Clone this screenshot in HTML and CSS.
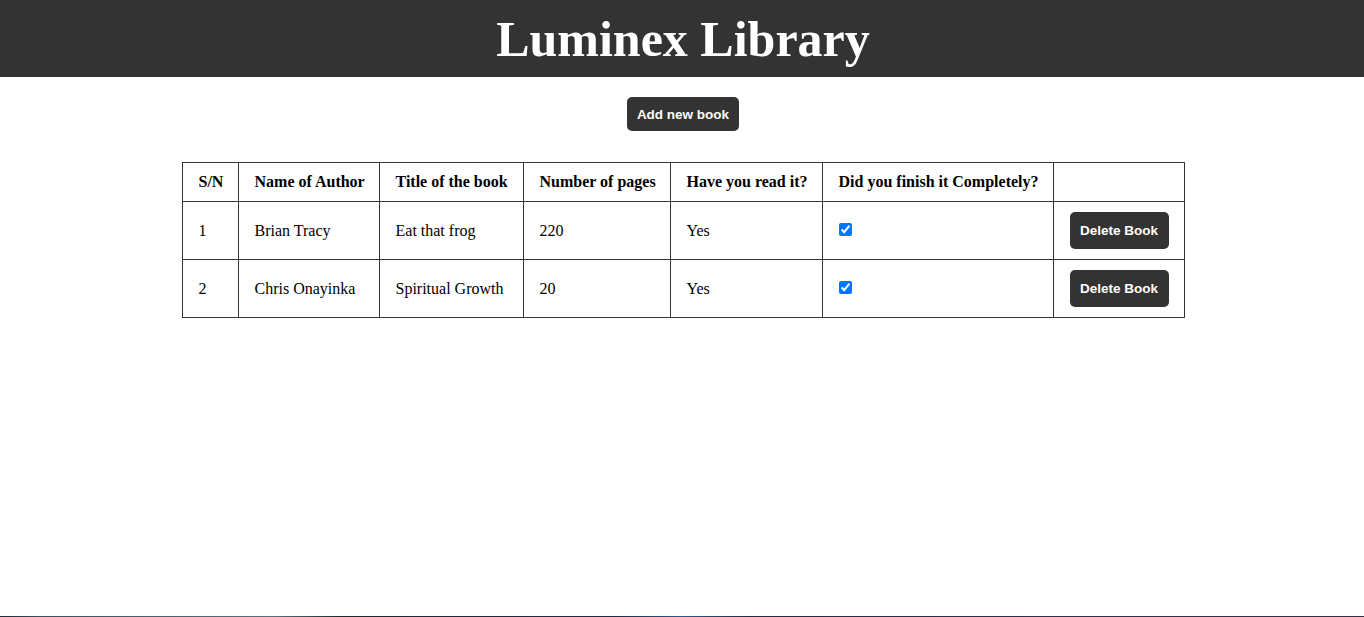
FILE: index.html
```html
<!DOCTYPE html>
<html lang="en">
<head>
<meta charset="utf-8">
<title>Luminex Library</title>
<link rel="stylesheet" href="styles.css">
</head>
<body>
<header class="site-header">
  <h1 class="site-title">Luminex Library</h1>
</header>
<main class="content">
  <button class="btn btn-add" type="button">Add new book</button>
  <table class="books">
    <colgroup>
      <col class="c-sn">
      <col class="c-author">
      <col class="c-title">
      <col class="c-pages">
      <col class="c-read">
      <col class="c-finish">
      <col class="c-action">
    </colgroup>
    <thead>
      <tr>
        <th>S/N</th>
        <th>Name of Author</th>
        <th>Title of the book</th>
        <th>Number of pages</th>
        <th>Have you read it?</th>
        <th>Did you finish it Completely?</th>
        <th></th>
      </tr>
    </thead>
    <tbody>
      <tr>
        <td>1</td>
        <td>Brian Tracy</td>
        <td>Eat that frog</td>
        <td>220</td>
        <td>Yes</td>
        <td><input class="check" type="checkbox" checked></td>
        <td><button class="btn btn-delete" type="button">Delete Book</button></td>
      </tr>
      <tr>
        <td>2</td>
        <td>Chris Onayinka</td>
        <td>Spiritual Growth</td>
        <td>20</td>
        <td>Yes</td>
        <td><input class="check" type="checkbox" checked></td>
        <td><button class="btn btn-delete" type="button">Delete Book</button></td>
      </tr>
    </tbody>
  </table>
</main>
<div class="taskbar-edge"></div>
</body>
</html>
```

FILE: styles.css
```css
html, body {
  margin: 0;
  padding: 0;
}

body {
  font-family: "Liberation Serif", "Times New Roman", serif;
  font-size: 16px;
  color: #000;
  background: #fff;
}

.site-header {
  background: #333;
  height: 77px;
  display: flex;
  align-items: center;
  justify-content: center;
  padding-left: 2px;
}

.site-title {
  margin: 0;
  color: #fff;
  font-family: "Liberation Serif", "Times New Roman", serif;
  font-weight: bold;
  font-size: 50px;
  line-height: 1;
}

.content {
  display: flex;
  flex-direction: column;
  align-items: center;
  padding-top: 20px;
  padding-left: 2px;
}

.btn {
  background: #333;
  color: #fff;
  border: none;
  border-radius: 5px;
  font-family: "Liberation Sans", Arial, sans-serif;
  font-weight: bold;
  font-size: 13.5px;
  cursor: pointer;
}

.btn-add {
  height: 34px;
  padding: 0 10px;
}

.books {
  margin-top: 31px;
  width: 1002px;
  table-layout: fixed;
  border-collapse: collapse;
  border: 1px solid #333;
}

.books th,
.books td {
  border: 1px solid #333;
  text-align: left;
  padding: 10px 15px 10px 16px;
  line-height: 18px;
  white-space: nowrap;
}

.books th {
  font-weight: bold;
}

.books td {
  height: 37px;
}

.c-sn { width: 56px; }
.c-author { width: 141px; }
.c-title { width: 144px; }
.c-pages { width: 147px; }
.c-read { width: 152px; }
.c-finish { width: 231px; }
.c-action { width: 131px; }

.check {
  margin: 0;
  width: 13px;
  height: 13px;
  accent-color: #0075ff;
  vertical-align: middle;
  position: relative;
  top: -2px;
}

.btn-delete {
  height: 37px;
  padding: 0 10.5px;
  display: block;
}

.taskbar-edge {
  position: fixed;
  left: 0;
  right: 0;
  bottom: 0;
  height: 1px;
  background: linear-gradient(90deg, #1c2a3a 0%, #3c5060 3%, #5a6e7c 20%, #1a2a30 25%, #1e2a4a 45%, #2a5a8a 50%, #222a48 55%, #2c3050 75%, #343048 100%);
}
```
